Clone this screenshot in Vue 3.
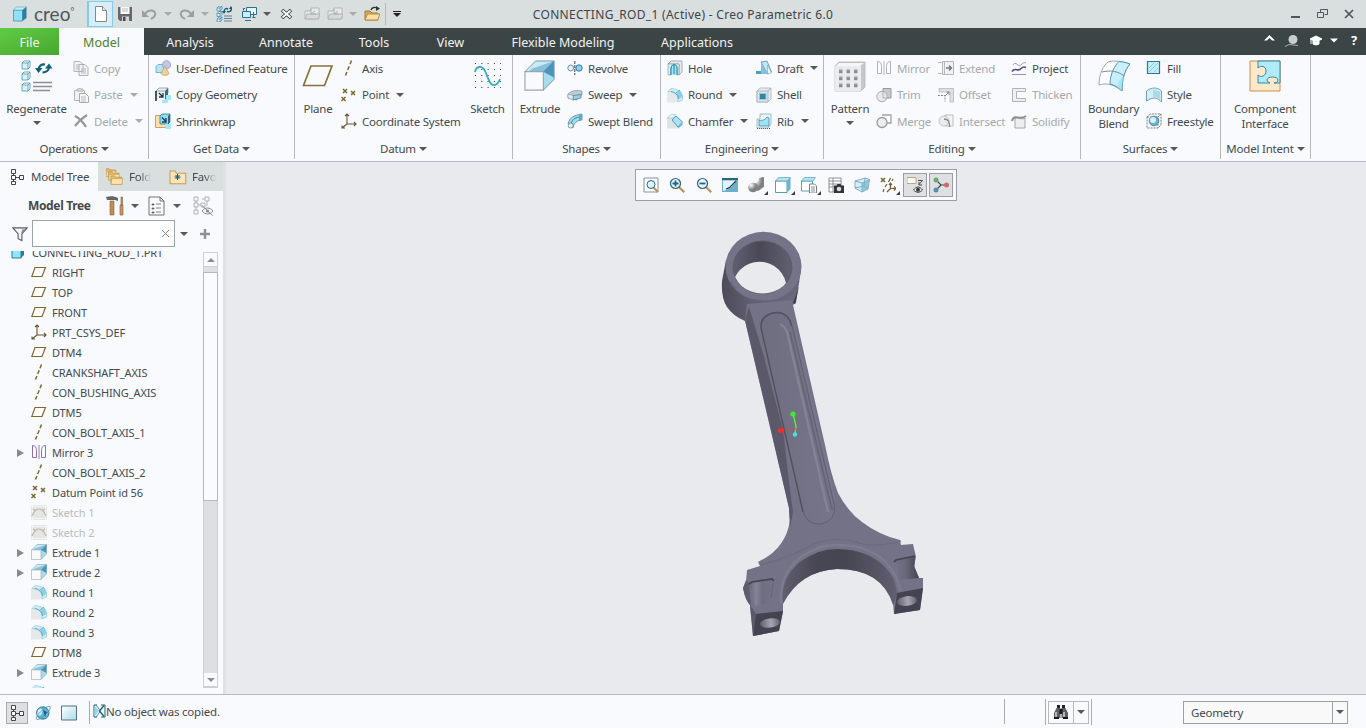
<script setup>
const box = (x, y, s = 5) =>
  `<path d="M${x} ${y + 2}h${s}v${s}h-${s}z" fill="#d9f4fc" stroke="#4a93ae" stroke-width=".8"/><path d="M${x} ${y + 2}l2-2h${s}l-2 2M${x + s + 2} ${y}v${s}l-2 2" fill="none" stroke="#4a93ae" stroke-width=".8"/>`
const xMark = (x, y, c = '#7b662f') => `<path d="M${x - 2} ${y - 2}l4 4m0-4l-4 4" stroke="${c}" stroke-width="1.5" fill="none"/>`
const magnifier = (inner) =>
  `<path d="M10.2 10.2l5 5" stroke="#b9945e" stroke-width="2.2"/><circle cx="6.5" cy="6.5" r="5" fill="#e9f6fc" stroke="#2d6079" stroke-width="1.2"/>${inner}`
const shapeExtrude =
  '<path d="M.5 6L6 .5h9.500L10 6z" fill="#c9e9f3"/><path d="M4 4.500L15.500 .5 10 6H2.500z" fill="#86c0da"/><path d="M15.500 .5V10L10 15.500V6z" fill="#a8dcec"/><path d="M15.500 .5V9L10 6z" fill="#4a93bb"/><path d="M.5 6H10v9.500H.5z" fill="#fafafc" stroke="#9aa7ae" stroke-width=".6"/><path d="M.5 6L6 .5h9.500V10L10 15.500M10 6l5.500-5.500" fill="none" stroke="#6f99ab" stroke-width=".5"/>'
const shapeRound =
  '<path d="M0 4.500C6 4.500 10 7 11 10v5.500H0z" fill="#e6e8ea"/><path d="M4 1.500C10 1.500 15 5 15.500 9v4L11 15V11C10 7 6 4.500 1 4.500z" fill="#c9eef8" stroke="#7fb9cd" stroke-width=".5"/><path d="M9.500 6.500l3.700-3C15 5.500 15.500 8 15.500 10L11 12c0-2.500-.5-4-1.500-5.500z" fill="#8dd0e5"/><path d="M4 4.500c4 .5 7 3 7.500 7.500M9 6l4-3" fill="none" stroke="#3f8eac" stroke-width=".7"/>'
const shapeMirror = (c) =>
  `<path d="M1.500 1.500c3 0 4 2 4 5v7h-4zM14.500 1.500c-3 0-4 2-4 5v7h4z" fill="none" stroke="${c}"/><path d="M8 1v14" stroke="${c}" stroke-width=".9"/>`
const shapeCsys =
  '<path d="M6 1v10h9M6 11l-5 4M4 3l2-2 2 2M13 9l2 2-2 2M1 12.500V15h3" fill="none" stroke="#6b5433" stroke-width="1.100"/>'
const shapePlane = '<path d="M4 3.500h10.500l-3.500 9H.800z" fill="#fdfdfb" stroke="#7d6734" stroke-width="1.200"/>'
const shapeAxis = '<path d="M10.500 .5L4.500 15.500" stroke="#7d6734" stroke-width="1.500" stroke-dasharray="4 2.200"/>'
const shapePoint = xMark(4, 4) + xMark(12, 6) + xMark(2.5, 12)
const shapeTree = (c) =>
  `<path d="M4.500 3v10M4.500 8.500h7" stroke="${c}" fill="none"/><path d="M2.500 .5h4v4h-4zM2.500 6.500h4v4h-4zM2.500 12.500h4v3h-4zM10.500 6.500h4v4h-4z" fill="#fff" stroke="${c}"/>`
const shapeFolder = (x, y, s = 1) =>
  `<g transform="translate(${x} ${y}) scale(${s})"><path d="M0 1h4l1 1.500h7v8H0z" fill="#e8bd73" stroke="#b48a43" stroke-width=".8"/><path d="M1 4h12l-1 6.500H0z" fill="#fbe2ac" stroke="#c79c54" stroke-width=".7"/></g>`
const greyFolder =
  '<path d="M1 13V5h5l1-3h8v11z" fill="#e9ebeb" stroke="#b3b7b7"/><path d="M1 13l2-5h13l-2 5z" fill="#d7dada" stroke="#b3b7b7"/><path d="M7 3v5h5M7 8l4-3" stroke="#a9aeae" fill="none"/>'

const icons = {
  cube: '<path d="M1.500 4h9v11h-9z" fill="#8fe0fa" stroke="#5a9fb5"/><path d="M1.500 4l3-3h10l-4 3z" fill="#c3effb" stroke="#5a9fb5" stroke-width=".6"/><path d="M14.500 1v11l-4 3V4z" fill="#2a7f9c"/>',
  newDoc: '<path d="M2.500 .5h7l4 4v11h-11z" fill="#fff" stroke="#81898c"/><path d="M9.500 .5v4h4" fill="#e7eaeb" stroke="#81898c"/>',
  save: '<path d="M1 1h14v14H3l-2-2z" fill="#66696b"/><path d="M3.500 1h9v7h-9z" fill="#fcfcfc"/><path d="M5 3h6M5 5h6" stroke="#bbb"/><path d="M5 10.500h7V15H5z" fill="#d6d8d8"/><path d="M6 11h2.500v4H6z" fill="#45484a"/>',
  undo: '<path d="M4 8c2-4 9-5 10-1 1 3-2 5-4 6" fill="none" stroke="#9a9fa0" stroke-width="2"/><path d="M1 4v7h7z" fill="#9a9fa0"/>',
  redo: '<path d="M12 8C10 4 3 3 2 7c-1 3 2 5 4 6" fill="none" stroke="#9a9fa0" stroke-width="2"/><path d="M15 4v7H8z" fill="#9a9fa0"/>',
  regen: box(1, 0, 3) + box(1, 5.500, 3) + box(1, 11, 3) + '<path d="M8 6c0-3 2-4 4-3M15 2c1 3-1 4-4 3.500" fill="none" stroke="#175d78" stroke-width="1.500"/><path d="M6 5h4L8 8zM17 3h-4l2-3z" fill="#175d78"/><path d="M8 10h8M8 12.500h8M8 15h8" stroke="#607f8c"/>',
  windows: '<path d="M5.500 1.500h10v7h-10z" fill="#e7f8fc" stroke="#306f8a"/><path d="M1.500 5.500h8v6h-8z" fill="#c9eef9" stroke="#306f8a"/><path d="M11.500 11.500h3M4 14.500h6M12.500 6v5M2.500 2.500v2M2 2.500h2" stroke="#306f8a" fill="none"/>',
  close: '<path d="M3 4l9 8m0-8l-9 8" stroke="#33393b" stroke-width="3.600"/><path d="M3.500 4.500l8 7m0-7l-8 7" stroke="#fff" stroke-width="1.800"/>',
  greyFolder,
  open: '<path d="M1 14V5h5l2 2h6v7z" fill="#d9a956" stroke="#a47b38"/><path d="M1 14l2.500-6H16l-2.500 6z" fill="#fbe0a4" stroke="#b98e49"/><path d="M7 4c1-3 4-3 6-2" stroke="#333" stroke-width="1.300" fill="none"/><path d="M12 0l4 2.500-4 2.500z" fill="#333"/>',
  regenerate: box(1, 1, 6) + box(1, 12, 6) + box(1, 23, 6) + '<path d="M17.500 10c0-4 3-6 6.500-5.500M28 6.500c0 4-3 6-6.500 6" fill="none" stroke="#12607d" stroke-width="2.200"/><path d="M14 8h7.500l-4 5zM31.500 8.500H24l4-5z" fill="#12607d"/><path d="M12 22.500h19M12 26.500h19M12 30.500h17" stroke="#8b9095" stroke-width="1.600"/>',
  copy: '<path d="M1 1.500h6l3 3v7H1zM6 4.500h6l3 3v8H6z" fill="#f1f2f3" stroke="#afb3b6"/><path d="M3 5h3M3 7h3M3 9h3M8 9h5M8 11h5M8 13h5" stroke="#b7babd"/>',
  paste: '<path d="M1.500 3.500h10v10h-10z" fill="#efefef" stroke="#b3b6b8"/><path d="M4 4V2h2l1-1 1 1h2v2z" fill="#ddd" stroke="#b3b6b8"/><path d="M6.500 6.500h6l3 3v6h-9z" fill="#f8f8f8" stroke="#a9adb0"/><path d="M8 10h5M8 12h5M8 14h5" stroke="#b7babd"/>',
  delete: '<path d="M2 3c4 2 8 6 11 11M14 2C9 5 5 9 2 13" fill="none" stroke="#94989b" stroke-width="2.200"/>',
  udf: '<path d="M1 6.500l2-2h8v6l-2 2H1z" fill="#b3e5f4" stroke="#5a9cb3" stroke-width=".7"/><circle cx="11.500" cy="4.800" r="4.200" fill="#c3c5ea" stroke="#8c90bd" stroke-width=".6"/><path d="M10 6l4 7.500c-1 2.500-7 2.500-8 0z" fill="#efcf9b" stroke="#b3935e" stroke-width=".6"/>',
  copyGeom: '<path d="M1 4l3-3h9v5M1 14V4h9" fill="#e9eef0" stroke="#8a959b" stroke-width=".8"/><path d="M1 14V4" stroke="#222f38" stroke-width="1.500"/><path d="M4 6l4 4M8 6v4H4" fill="none" stroke="#1b3444" stroke-width="1.300"/><path d="M10 4l3-3v8l-3 4z" fill="#2c6f86"/><path d="M11 8h5v5h-5zM7 13h6v3H7z" fill="#9feaff"/>',
  shrinkwrap: '<path d="M.5 2.500h12v12H.5z" fill="#fbdfae" stroke="#cfa159"/><path d="M5 3l2-2h8v8l-2 2H5z" fill="#94dbf1" stroke="#34738b" stroke-width=".8"/><path d="M13 3l2-2v8l-2 2z" fill="#2d6988"/><path d="M7 4.500l4 4M11 5v4H7" fill="none" stroke="#1b3f55" stroke-width="1.300"/><path d="M10.500 11H16v5h-5.500z" fill="#a0eaff"/>',
  planeBig: '<path d="M9 6h21L22.500 25.500H1.500z" fill="none" stroke="#86723d" stroke-width="1.700"/>',
  axis: shapeAxis,
  point: shapePoint,
  csys: shapeCsys,
  sketchBig: '<g stroke="#2d3338" stroke-width="1" stroke-dasharray="1 5.300"><path d="M3 3.500h26M3 9.500h26M3 15.500h26M3 21.500h26M3 27.500h26"/></g><path d="M3 12C4 6 10 5 13 11c4 9 5 15 10 14 3-1 4-3 5-6" fill="none" stroke="#35a9c7" stroke-width="1.800"/>',
  extrudeBig: `<g transform="scale(1.940)">${shapeExtrude}</g>`,
  revolve: '<circle cx="3.700" cy="8" r="2.900" fill="#dff3fa" stroke="#6f93a3"/><circle cx="12" cy="8" r="3.200" fill="#8fd3ea" stroke="#2f7a98"/><path d="M7.800 1v14" stroke="#3e454a" stroke-dasharray="3 1"/>',
  sweep: '<path d="M1 7C5 3 10 3 15 4v4l-5 1v4L5 12 1 11z" fill="#bccdd5" stroke="#7b929d" stroke-width=".7"/><path d="M6 8.500l8-1v3.500l-8 2z" fill="#9cd0e2" stroke="#507787" stroke-width=".7"/><path d="M1 7l5 1.500V13l-5-2z" fill="#e4ebee" stroke="#7b929d" stroke-width=".6"/>',
  sweptBlend: '<path d="M1 11C2 5 7 2 15 1v6c-5 0-8 3-9 8z" fill="#a5dbec" stroke="#4c8aa3" stroke-width=".8"/><path d="M4 11C5 6 9 4 14 4" fill="none" stroke="#246b8b" stroke-width=".8"/><path d="M15 1v6l-3 1V2z" fill="#5fa9c5"/><circle cx="3.700" cy="12.500" r="2.500" fill="#e7f3f6" stroke="#6b8793" stroke-width=".8"/>',
  hole: '<path d="M1 4l3-3h11v11l-3 3V4z" fill="#e8ecee" stroke="#8aa0a9" stroke-width=".8"/><path d="M1 4h11v11h-2V8c0-4-6-4-6 0v7H1z" fill="#d8eef5" stroke="#8aa0a9" stroke-width=".7"/><path d="M4 15V8c1-5 6-4 6 0v7M7 5v9" fill="#a3ebff" stroke="#18799a"/>',
  round: shapeRound,
  chamfer: '<path d="M0 5h6l5 6v4.500H0z" fill="#e0e3e5"/><path d="M0 5l4-3.500h5l-3 3.500z" fill="#e9f6fa" stroke="#8bb5c5" stroke-width=".5"/><path d="M9 3l6.500 6-4.500 5-6-7z" fill="#a9e4f5" stroke="#3385a4" stroke-width=".8"/><path d="M11 14l4.500-5v3L11 15.500z" fill="#6bb5d0"/>',
  draft: '<path d="M5 2l6-1 4.500 11-4 2z" fill="#c3e6f1" stroke="#5490a8" stroke-width=".8"/><path d="M5 2l6 12H5z" fill="#7fc2dd"/><path d="M0 11h5v3H0z" fill="#4f9dc2"/><path d="M11.500 5l4 8-4 1z" fill="#e9f5f9" stroke="#6c9bac" stroke-width=".5"/>',
  shell: '<path d="M1 4l3-3h11v11l-3 3H1z" fill="#e6ebed" stroke="#a5b1b7" stroke-width=".8"/><path d="M1 4h11v11H1z" fill="#dbe4e8" stroke="#a5b1b7" stroke-width=".8"/><path d="M3.500 6.500h6.500v6H3.500z" fill="#3c7f9f" stroke="#86cfe5"/><path d="M12 4l3-3" stroke="#a5b1b7"/>',
  rib: '<path d="M1 6h3V1h11v10l-3 4H1z" fill="#eef7fa" stroke="#8badb9" stroke-width=".8"/><path d="M3 13V7c3 1 6 0 8-3l2 1v8z" fill="#9fe2f4" stroke="#418ba3" stroke-width=".8"/><path d="M1 15.500h13" stroke="#38687a" stroke-dasharray="1 1"/>',
  patternBig: '<path d="M1 6l4-4h26v25l-4 4H1z" fill="#c5c7c9" stroke="#b4b7b9" stroke-width=".8"/><path d="M1 6h26v25H1z" fill="#ececee"/><path d="M5 3h25l-4 3H2z" fill="#f5f5f6"/><g stroke="#8a8e91" stroke-width="3.500" stroke-dasharray="3.500 4"><path d="M5 11.500h19M5 18.500h19M5 25.500h19"/></g><g stroke="#c4c7c8" stroke-width="1.300" stroke-dasharray="3.500 4"><path d="M5 9.500h19M5 16.500h19M5 23.500h19"/></g>',
  mirrorGrey: shapeMirror('#b0b3b6'),
  extend: '<path d="M4.500 1.500h11v13h-11z" fill="#f2f2f3" stroke="#b3b6b8"/><path d="M6.500 2v12M0 2.500h4M0 13.500h4" stroke="#b9bcbe"/><path d="M8 8h5M11 5.500L13.500 8 11 10.500" fill="none" stroke="#707579" stroke-width="1.300"/>',
  trim: '<path d="M7 1.500h8V11H7z" fill="#c8cacc" stroke="#96999b"/><circle cx="6" cy="9.500" r="5.200" fill="#e8e9ea" stroke="#a9acae"/><path d="M7 5v6h4" fill="none" stroke="#aeb1b3"/>',
  merge: '<path d="M6 2h9v8h-4" fill="#fff" stroke="#a0a3a5" stroke-width="1.300"/><circle cx="6" cy="9.500" r="5" fill="#eee" stroke="#999c9f" stroke-width="1.300"/>',
  offset: '<path d="M1 1.500h14.500V15H12V5H1z" fill="#dddfe0" stroke="#b4b7b9" stroke-width=".8"/><path d="M0 8.500h7v6" fill="none" stroke="#888b8d" stroke-dasharray="2 1"/><path d="M7 9l4-4M8.500 5H11v3" fill="none" stroke="#85898b"/>',
  intersect: '<path d="M7 2h8v11H7z" fill="#f4f4f5" stroke="#bbbec0"/><circle cx="6" cy="8" r="5" fill="#ececee" stroke="#c0c3c4"/><path d="M6 6c4 0 6 3 5.500 8" fill="none" stroke="#888b8d" stroke-width="1.400"/>',
  project: '<path d="M2 5c3-5 5 3 8 0 2-2 3-3 5-2" stroke="#9da0a4" fill="none"/><path d="M1 11.500c3-5 6 1 9-3 2-2 3-2 5-1" stroke="#5d4389" stroke-width="1.600" fill="none"/><path d="M1 14.500h14" stroke="#9a8db0"/>',
  thicken: '<path d="M14.500 1.500H1.500v13h13v-3H5.500v-7h9z" fill="#f0f0f1" stroke="#b0b3b5"/>',
  solidify: '<path d="M4 6c3-4 6 2 10-1v10H4z" fill="#eeeeef" stroke="#a4a7a9"/><path d="M1 8c2-8 7 0 14-5" fill="none" stroke="#8c8f92" stroke-width="2"/>',
  boundary: '<path d="M1 25C1 14 5 5 11 1.500c6-1 12-.5 21 2.500-6 7-8 16-8 27C18 26 10 22 1 25z" fill="#fff" stroke="#9ba7ad"/><path d="M21 1.500c5 .5 7 1 11 2.500-6 7-8 16-8 27-4-4-8-6-12-7C12 15 16 6 21 1.500z" fill="#c9effa" stroke="#4a87a0" stroke-width=".9"/><path d="M4 12c8-2 16-1 22 4" fill="none" stroke="#75909b"/><path d="M26 16l6-12c-5 8-8 17-8 27l-5-4c1-5 3-8 7-11z" fill="#8ddef3" opacity=".6"/>',
  fill: '<path d="M1.500 1.500h12v12h-12z" fill="#c4effa" stroke="#287998" stroke-width="1.200"/><path d="M3 8l5-5M3 12L12 3M8 12l4-4" stroke="#73c1da" stroke-width=".8"/>',
  style: '<path d="M.5 4c5-4 11-4 15 0v11c-4-5-9-5-15-1z" fill="#d5edf4" stroke="#5f99ae" stroke-width=".9"/><path d="M7 3c4 0 6 1 7 2v7c-2-2-5-2-7-2z" fill="#a9dae8"/>',
  freestyle: '<path d="M1 4l3-3h11v11l-3 3H1zM1 4h11v11M12 4l3-3" fill="#f6fafb" stroke="#5c6468" stroke-width=".8" stroke-dasharray="2 1"/><circle cx="8" cy="8" r="4.800" fill="#69b4cd" stroke="#3f8199" stroke-width=".8"/><circle cx="7" cy="7" r="3" fill="#d5f2fa"/>',
  component: '<path d="M1 1h30v30H1z" fill="#fde9c9" stroke="#c6924f"/><path d="M9 1h22v22h-6c2 0 4-1 4-3 0-4-11-4-11 0 0 2 2 2 3 3H9v-8c3 3 8 1 8-4s-5-6-8-3z" fill="#b0ebfa" stroke="#287b99" stroke-width=".9"/>',
  treeDark: shapeTree('#41474b'),
  folders: shapeFolder(0, 0, .8) + shapeFolder(2.500, 3, .85) + shapeFolder(5, 7, .9),
  favorite: '<g transform="translate(1 2) scale(1.050)"><path d="M0 1h5l1 2h9v10H0z" fill="#fae4b8" stroke="#c69d57"/></g><path d="M8.500 6v6M5.500 9h6M6.500 7l4 4m0-4l-4 4" stroke="#175a79"/>',
  tools: '<path d="M0 1c4-1.500 9-1 12 1v3L9 4H1z" fill="#63696b"/><path d="M4 5h4v14H4z" fill="#c08f55" stroke="#76552e" stroke-width=".5"/><path d="M15 1h1.500v8H15zM14 9h3v10h-3z" fill="#c9985b" stroke="#755d3e" stroke-width=".6"/>',
  settings: '<path d="M1 1h11l4 4v14H1z" fill="#fafafa" stroke="#6f7578"/><path d="M12 1v4h4" fill="none" stroke="#6f7578"/><path d="M4 8h2v1H4zM4 12h2v1H4zM4 16h2v1H4zM8 8h5M8 12h5M8 16h5" stroke="#71777a" stroke-width=".9"/>',
  hideTree: '<path d="M3 3v13M3 9h6M9 3h7M14 3v7" stroke="#b0b4b6"/><path d="M1 1h4v4H1zM1 7h4v4H1zM1 14h4v4H1zM8 7h4v4H8zM12 1h4v4h-4z" fill="#f5f6f6" stroke="#b0b4b6"/><path d="M9 15c3-4 8-4 11 0-3 4-8 4-11 0M9 9.500l10.500 10" stroke="#858a8d" fill="none"/><circle cx="14.500" cy="15" r="1.600" fill="#858a8d"/>',
  funnel: '<path d="M1 1.500h15L10.500 8v7l-4-2V8z" fill="#f3f5f6" stroke="#575f63" stroke-width="1.200"/><path d="M11 3h3L9.500 8z" fill="#879096"/>',
  partCube: '<path d="M2 4h9v10H2z" fill="#8ee8ff" stroke="#317b93"/><path d="M11 4l3-3v10l-3 3z" fill="#317b93"/>',
  plane: shapePlane,
  mirror: shapeMirror('#8a71ac'),
  sketch: '<path d="M0 1h16v15H0z" fill="#e5e6e4"/><path d="M1.500 1v15M14.500 1v15M0 2.500h16M0 14.500h16" stroke="#f3f3f0"/><path d="M1 12C3 7 6 5 8 5s5 2 7 7M2 5l3 2M14 5l-3 2" stroke="#bcb8aa" stroke-width="1.200" fill="none"/>',
  extrude: shapeExtrude,
  fit: '<path d="M1 1h14v14H1z" fill="#fafcfd" stroke="#89949a"/><path d="M10 10l5 5" stroke="#ba965d" stroke-width="2"/><circle cx="8" cy="7.500" r="4" fill="#def3fb" stroke="#2c657e"/>',
  zoomIn: magnifier('<path d="M3.500 6.500h6M6.500 3.500v6" stroke="#1c6686" stroke-width="1.800"/>'),
  zoomOut: magnifier('<path d="M3.500 6.500h6" stroke="#1c6686" stroke-width="1.800"/>'),
  repaint: '<path d="M0 1h16v14H0z" fill="#6fb0c8"/><path d="M0 1h16v2H0z" fill="#276883"/><path d="M1 3.500h13c-2 5-6 9-13 10.500z" fill="#e2f4fa"/><path d="M4 12c3-1 4-1 5-3l5-5" fill="none" stroke="#193f53" stroke-width="1.200"/>',
  shading: '<defs><radialGradient id="sphereShade" cx=".3" cy=".25"><stop stop-color="#fdfdfd"/><stop offset="1" stop-color="#7d8184"/></radialGradient></defs><path d="M5 6C9 7 11 3 11 1l5-1v10c-3 1-4 4-7 4z" fill="url(#sphereShade)"/><circle cx="5" cy="10.500" r="4.800" fill="url(#sphereShade)"/>',
  savedView: '<path d="M.5 4h11.500v11.500H.5z" fill="#fff" stroke="#5b9fb7"/><path d="M.5 4l3-3.500h12L12 4z" fill="#b4e4f2" stroke="#5b9fb7" stroke-width=".7"/><path d="M12 4l3.500-3.500V12L12 15.500z" fill="#69b5d0"/>',
  viewManager: '<path d="M.5 4h11v10H.5z" fill="#fff" stroke="#5b9fb7"/><path d="M.5 4l3-3.500h11L12 4z" fill="#b4e4f2" stroke="#5b9fb7" stroke-width=".7"/><path d="M8.500 7h5l2 2v7h-7z" fill="#fff" stroke="#6c7478" stroke-width=".9"/><path d="M10 10h4M10 12h4M10 14h4" stroke="#6c7478" stroke-width=".8"/>',
  camera: '<path d="M1 1h12v14H1zM1 4h12M1 7h12M1 10h12M5 1v14" fill="#fff" stroke="#7f8486" stroke-width=".9"/><path d="M6 8.500h2.500l1-1.500h3l1 1.500H16V16H6z" fill="#303436"/><circle cx="11" cy="12" r="2.300" fill="#d8dcdd"/>',
  perspective: '<path d="M1 4l10-3 4.500 1.500L14 12l-6 3-7-4z" fill="#d6edf5" stroke="#6a9fb4" stroke-width=".8"/><path d="M1 4l7 2 7.500-3.500M8 6v9M11 1l-1 8 4 3M1 11l9-2" fill="none" stroke="#6a9fb4" stroke-width=".8"/><path d="M8 6l7-3-1 9-6 3z" fill="#75b7d0" opacity=".7"/>',
  datums: xMark(3, 3) + '<path d="M10.500 1l-2 4M7 7l-2 3M4 12l-1 3M13 2l-1 2M10.500 6v5.500h5M10.500 11.500L7 15M14 9.500l2 2-2 2M9 8l1.500-2L12 8" stroke="#725c32" stroke-width="1.200" fill="none"/>',
  annotation: '<path d="M0 .5h9v6H0z" fill="#fffdf5" stroke="#b5a983"/><path d="M11 3.500h4.500L12 7.500M12 5v3h3" fill="none" stroke="#464b4e"/><path d="M6.500 13c3-4 6-4 9 0-3 3-6 3-9 0" fill="#eee" stroke="#363b3e"/><circle cx="11" cy="12.800" r="2" fill="#363b3e"/>',
  spin: '<path d="M3 3l5 5h6M8 8l-5 5" stroke="#45494b" stroke-width="1.200" fill="none"/><circle cx="3" cy="3" r="2.500" fill="#6ba870"/><circle cx="13.500" cy="8" r="2.500" fill="#d06a6a"/><circle cx="3" cy="13" r="2.500" fill="#5a8fb3"/>',
  globe: '<circle cx="7.800" cy="8" r="6.200" fill="#5fb3da" stroke="#2d7ba1"/><path d="M3 5c4-3 5 0 4 3-2 4-3 2-5 2M9 12c0-5 5-3 5-5" fill="#d5f2fb"/><path d="M2 14.500C-2 13 11 0 15 1.500c2 3-8 13-13 13" fill="none" stroke="#5b8fa8" stroke-width=".9"/><path d="M8 5l4 2-2 5z" fill="#1d628a"/>',
  blank: '<defs><linearGradient id="pane" x2="1" y2="1"><stop stop-color="#fff"/><stop offset="1" stop-color="#a8dce9"/></linearGradient></defs><path d="M.5 1h15v14H.5z" fill="url(#pane)" stroke="#53717e"/>',
  message: '<path d="M4 1H1v12h3M8 1h4v12H8" fill="#eef8fb" stroke="#20637b"/><path d="M1.500 2L6 7l-4.500 5z" fill="#8ad9ed"/><path d="M3 1l4.500 6M3 13l4.500-6" stroke="#2d7590" stroke-width=".8"/><path d="M11 1.500L6.500 7l4.500 5.500" fill="none" stroke="#1c5d78" stroke-width="1.300"/>',
  binoculars: '<path d="M4 1h3v3H4zM9 1h3v3H9z" fill="#222"/><path d="M3.500 4h4v10H1V9zM8.500 4h4L15 9v5H8.500z" fill="#5c6062"/><path d="M2 8h2v5H2zM10 8h2v5h-2z" fill="#b4b7b9"/><path d="M6.500 5h3v5h-3zM1 13h5v2H1zM10 13h5v2h-5z" fill="#151719"/>'
}

const quickTools = [
  ['newDoc', 25, 'active'], ['save', 24], ['undo', 24], ['', 14, 'dim'], ['redo', 24], ['', 12, 'dim'],
  ['regen', 26], ['windows', 23], ['', 14], ['close', 26], ['greyFolder', 23], ['greyFolder', 24], ['', 12, 'dim'], ['open', 26]
]
const tabs = [
  ['File', 59, 'file'], ['Model', 85, 'current'], ['Analysis', 92], ['Annotate', 100], ['Tools', 76],
  ['View', 77], ['Flexible Modeling', 148], ['Applications', 120]
]
const list = (w, ...items) => ({ w, items: items.map(([icon, label, opt = '']) => ({ icon, label, dim: opt.includes('d'), menu: opt.includes('m') })) })
const big = (w, icon, lines, menu) => ({ w, icon, lines, menu })
const groups = [
  { w: 149, title: 'Operations', cols: [big(73, 'regenerate', ['Regenerate'], true), list(75, ['copy', 'Copy', 'd'], ['paste', 'Paste', 'dm'], ['delete', 'Delete', 'dm'])] },
  { w: 146, title: 'Get Data', cols: [big(6), list(139, ['udf', 'User-Defined Feature'], ['copyGeom', 'Copy Geometry'], ['shrinkwrap', 'Shrinkwrap'])] },
  { w: 218, title: 'Datum', cols: [big(46, 'planeBig', ['Plane']), list(122, ['axis', 'Axis'], ['point', 'Point', 'm'], ['csys', 'Coordinate System']), big(49, 'sketchBig', ['Sketch'])] },
  { w: 148, title: 'Shapes', cols: [big(54, 'extrudeBig', ['Extrude']), list(93, ['revolve', 'Revolve'], ['sweep', 'Sweep', 'm'], ['sweptBlend', 'Swept Blend'])] },
  { w: 163, title: 'Engineering', cols: [big(6), list(89, ['hole', 'Hole'], ['round', 'Round', 'm'], ['chamfer', 'Chamfer', 'm']), list(67, ['draft', 'Draft', 'm'], ['shell', 'Shell'], ['rib', 'Rib', 'm'])] },
  { w: 257, title: 'Editing', cols: [big(52, 'patternBig', ['Pattern'], true), list(62, ['mirrorGrey', 'Mirror', 'd'], ['trim', 'Trim', 'd'], ['merge', 'Merge', 'd']), list(73, ['extend', 'Extend', 'd'], ['offset', 'Offset', 'd'], ['intersect', 'Intersect', 'd']), list(69, ['project', 'Project'], ['thicken', 'Thicken', 'd'], ['solidify', 'Solidify', 'd'])] },
  { w: 140, title: 'Surfaces', cols: [big(65, 'boundary', ['Boundary', 'Blend']), list(74, ['fill', 'Fill'], ['style', 'Style'], ['freestyle', 'Freestyle'])] },
  { w: 90, title: 'Model Intent', cols: [big(88, 'component', ['Component', 'Interface'])] }
]
const tree = [
  ['plane', 'RIGHT'], ['plane', 'TOP'], ['plane', 'FRONT'], ['csys', 'PRT_CSYS_DEF'], ['plane', 'DTM4'],
  ['axis', 'CRANKSHAFT_AXIS'], ['axis', 'CON_BUSHING_AXIS'], ['plane', 'DTM5'], ['axis', 'CON_BOLT_AXIS_1'],
  ['mirror', 'Mirror 3', 'e'], ['axis', 'CON_BOLT_AXIS_2'], ['point', 'Datum Point id 56'],
  ['sketch', 'Sketch 1', 'd'], ['sketch', 'Sketch 2', 'd'], ['extrude', 'Extrude 1', 'e'], ['extrude', 'Extrude 2', 'e'],
  ['round', 'Round 1'], ['round', 'Round 2'], ['round', 'Round 3'], ['plane', 'DTM8'], ['extrude', 'Extrude 3', 'e'], ['round', '']
]
const viewTools = [
  ['fit'], ['zoomIn'], ['zoomOut'], ['repaint'], ['shading', 'c'], ['savedView', 'c'], ['viewManager', 'c'],
  ['camera'], ['perspective'], ['datums', 'c'], ['annotation', 'on'], ['spin', 'on']
]
</script>

<template>
  <div class="app">
    <header class="titlebar">
      <svg class="ic logo-cube" viewBox="0 0 16 16" v-html="icons.cube"></svg>
      <span class="logo">creo<i>°</i></span>
      <div class="quick">
        <span v-for="(t, i) in quickTools" :key="i" class="slot" :class="t[2]" :style="{ width: t[1] + 'px' }">
          <svg v-if="t[0]" class="ic" viewBox="0 0 16 16" v-html="icons[t[0]]"></svg>
          <b v-else class="arrow"></b>
        </span>
        <span class="customize"><b class="arrow"></b></span>
      </div>
      <span class="title">CONNECTING_ROD_1 (Active) - Creo Parametric 6.0</span>
      <svg class="window-controls" viewBox="0 0 70 16">
        <path d="M1 11h9" stroke-width="2" />
        <path d="M27.500 6.500h6v5h-6zM30.500 6V3.500h7v5h-3" />
        <path d="M55 4l8 8m0-8l-8 8" stroke-width="1.700" />
      </svg>
    </header>

    <nav class="tabs">
      <span v-for="t in tabs" :key="t[0]" :class="t[2]" :style="{ width: t[1] + 'px' }">{{ t[0] }}</span>
      <svg class="nav-icons" viewBox="0 0 98 18">
        <path d="M0 8.500l5.500-5.500L11 8.500H8L5.500 6 3 8.500z" fill="#fff" />
        <circle cx="29" cy="7.500" r="4.500" fill="#c9cdcd" /><path d="M21 14.500l4-2 9 1" fill="none" stroke="#a7adad" />
        <path d="M46 7l6-3 6 3-6 3zM49 9v3q3 2 6 0V9M47 8v4" fill="#fff" stroke="#fff" />
        <path d="M66 6.500h8l-4 4z" fill="#fff" />
        <text x="87" y="13">?</text>
      </svg>
    </nav>

    <section class="ribbon">
      <div v-for="g in groups" :key="g.title" class="group" :style="{ width: g.w + 'px' }">
        <div class="cols">
          <div v-for="(c, i) in g.cols" :key="i" class="col" :class="{ large: !c.items }" :style="{ width: c.w + 'px' }">
            <template v-if="c.items">
              <div v-for="it in c.items" :key="it.label" class="cmd" :class="{ dim: it.dim }">
                <svg class="ic" viewBox="0 0 16 16" v-html="icons[it.icon]"></svg>
                <span>{{ it.label }}</span><b v-if="it.menu" class="arrow"></b>
              </div>
            </template>
            <template v-else-if="c.icon">
              <svg class="ic-big" viewBox="0 0 32 32" v-html="icons[c.icon]"></svg>
              <span v-for="l in c.lines" :key="l" class="line">{{ l }}</span>
              <b v-if="c.menu" class="arrow"></b>
            </template>
          </div>
        </div>
        <div class="group-title">{{ g.title }}<b class="arrow"></b></div>
      </div>
    </section>

    <main class="work">
      <aside class="side">
        <div class="side-tabs">
          <span class="side-tab on"><svg class="ic" viewBox="0 0 16 16" v-html="icons.treeDark"></svg>Model Tree</span>
          <span class="side-tab folder-tab"><svg class="ic wide" viewBox="0 0 18 18" v-html="icons.folders"></svg><em>Fold</em></span>
          <span class="side-tab favorite-tab"><svg class="ic wide" viewBox="0 0 18 18" v-html="icons.favorite"></svg><em>Favo</em></span>
        </div>
        <div class="tree-head">
          <strong>Model Tree</strong>
          <svg class="ic20" viewBox="0 0 20 20" v-html="icons.tools"></svg><b class="arrow"></b>
          <svg class="ic20" viewBox="0 0 20 20" v-html="icons.settings"></svg><b class="arrow"></b>
          <svg class="ic20 hide" viewBox="0 0 20 20" v-html="icons.hideTree"></svg>
        </div>
        <div class="search">
          <svg class="ic" viewBox="0 0 17 16" v-html="icons.funnel"></svg>
          <div class="field"><svg viewBox="0 0 10 10"><path d="M1 1l8 8m0-8L1 9" /></svg></div>
          <b class="arrow"></b>
          <svg class="plus" viewBox="0 0 12 12"><path d="M6 1v10M1 6h10" /></svg>
        </div>
        <div class="tree-area">
          <div class="tree">
            <div class="row root"><svg class="ic" viewBox="0 0 16 16" v-html="icons.partCube"></svg><span>CONNECTING_ROD_1.PRT</span></div>
            <div v-for="(r, i) in tree" :key="i" class="row" :class="{ dim: r[2] === 'd' }">
              <i class="expander" :class="{ shown: r[2] === 'e' }"></i>
              <svg class="ic" viewBox="0 0 16 16" v-html="icons[r[0]]"></svg><span>{{ r[1] }}</span>
            </div>
          </div>
          <div class="scroll">
            <div class="scroll-btn"><b class="up"></b></div>
            <div class="thumb"></div>
            <div class="scroll-btn last"><b class="arrow"></b></div>
          </div>
        </div>
      </aside>

      <section class="canvas">
        <div class="view-bar">
          <span v-for="t in viewTools" :key="t[0]" class="view-tool" :class="t[1]">
            <svg class="ic" viewBox="0 0 16 16" v-html="icons[t[0]]"></svg>
          </span>
        </div>
        <svg class="rod" viewBox="715 225 215 420">
          <defs>
            <linearGradient id="bore" x1="0" x2="1"><stop stop-color="#615f70" /><stop offset=".45" stop-color="#4a4855" /><stop offset="1" stop-color="#625f71" /></linearGradient>
            <linearGradient id="arch" x1="0" x2="1"><stop stop-color="#605e6f" /><stop offset=".3" stop-color="#484652" /><stop offset=".55" stop-color="#474551" /><stop offset="1" stop-color="#615f70" /></linearGradient>
            <linearGradient id="collar" x1="0" x2="1"><stop stop-color="#4d4b59" /><stop offset=".35" stop-color="#5f5d6e" /><stop offset="1" stop-color="#6c6a7d" /></linearGradient>
            <linearGradient id="pin" x1="0" x2="1"><stop stop-color="#625f6d" /><stop offset=".55" stop-color="#a8a6b2" /><stop offset="1" stop-color="#65626f" /></linearGradient>
            <linearGradient id="web" x1="0" x2="1"><stop stop-color="#6f6d80" /><stop offset="1" stop-color="#777589" /></linearGradient>
            <linearGradient id="notchRight" x1="0" x2="1"><stop stop-color="#747286" /><stop offset=".4" stop-color="#6a687a" /><stop offset="1" stop-color="#464452" /></linearGradient>
            <linearGradient id="notchLeft" x1="0" x2="1"><stop stop-color="#676577" /><stop offset=".3" stop-color="#858395" /><stop offset=".55" stop-color="#6f6d80" /><stop offset="1" stop-color="#747286" /></linearGradient>
            <clipPath id="boreClip"><ellipse cx="762.500" cy="267.300" rx="29.500" ry="26.300" /></clipPath>
          </defs>
          <path d="M726 260L722 281Q721 298 727 307T745 321L757 328L796 303L801 270z" fill="url(#collar)" />
          <path d="M747 304L792.500 300L793 305L821.500 430L825 445Q831 475 838 493Q848 512 862 522Q879 535 900 540L901 545L913 544L916 557L914 566L919 578H923V588L920 610L894 614L893 603Q883 569 837 569Q800 571 783 602L783 612L779 631L753 636L750 605Q745 600 743 588L746 582L747 570L760 566L758 562Q786 549 790 520L789 508L745 321z" fill="#747286" />
          <path d="M745 320L749 307L763 353L783 430L790 490L793 512L790 528L789 508L771 430z" fill="#5b5969" />
          <path d="M793 303L799 286L795 304z" fill="#3f3d49" />
          <ellipse cx="763.500" cy="266.500" rx="38" ry="34.700" fill="#757387" />
          <ellipse cx="762.500" cy="267.300" rx="29.500" ry="26.300" fill="url(#bore)" stroke="#5a5867" stroke-width=".8" />
          <ellipse cx="759.500" cy="288" rx="27" ry="26.300" fill="#e8eaed" clip-path="url(#boreClip)" />
          <path d="M731 282Q738 300 765 301Q793 301 799 281" fill="none" stroke="#656377" />
          <path d="M761 328Q760 313 777 312Q790 313 792 326L835 507Q837 523 821 525Q808 526 803 511z" fill="url(#web)" />
          <path d="M803 512L761 328Q760 314 777 312.500Q789 313 791.500 326" fill="none" stroke="#535160" stroke-width="1.500" />
          <path d="M780 324Q787 327 789 340L828 512" fill="none" stroke="#848295" stroke-width="2.400" />
          <path d="M790 332L832 510" stroke="#656376" stroke-width="1.500" fill="none" />
          <path d="M792 325L834 504Q837 520 822 524Q807 526 803 511" fill="none" stroke="#5f5d70" stroke-width="1" />
          <path d="M794 325L835 501" stroke="#7f7d90" stroke-width=".8" />
          <path d="M760 565Q792 557 814 544Q837 535 862 544Q880 547 901 541" fill="none" stroke="#6c6a7d" stroke-width="1.200" />
          <path d="M781 603Q779 574 801 557Q820 544 838 545Q875 545 892 570Q899 580 900 591" fill="none" stroke="#7d7b8f" stroke-width="2.500" />
          <path d="M783 604Q780 578 800 562Q817 549 837 549Q872 549 890 573Q897 583 897 596L893 605Q882 569 837 569Q800 571 783 604z" fill="url(#arch)" />
          <path d="M743 588L746 580L749 584L751 606Q746 602 743 588z" fill="#5d5b6c" />
          <path d="M749 583L773 579L771 603L755 606z" fill="url(#notchLeft)" />
          <path d="M749 584L752 582L772 579L774 581" fill="none" stroke="#45434f" stroke-width="1.700" /><path d="M773 583L771 598" stroke="#636173" stroke-width=".8" />
          <path d="M750 605L756 614L753 636z" fill="#5b5969" /><path d="M756 614L783 611L779 631L753 636z" fill="#454351" />
          <ellipse cx="770" cy="623" rx="10" ry="4.500" transform="rotate(-8 770 623)" fill="url(#pin)" />
          <path d="M896 560L915 556L914.500 567L919 578L898 580z" fill="url(#notchRight)" /><path d="M894 562L896 560L915 556" fill="none" stroke="#45434f" stroke-width="1.700" />
          <path d="M897 593L923 588L920 610L894 614z" fill="#454351" />
          <ellipse cx="907" cy="601" rx="10" ry="4.800" transform="rotate(-8 907 601)" fill="url(#pin)" />
          <path d="M793 414L796 426L795 434" fill="none" stroke="#52ff28" stroke-width="1.300" /><circle cx="793" cy="414" r="2.600" fill="#3eea2e" />
          <path d="M780 430.500L797 429" stroke="#df414a" stroke-dasharray="4 1" /><path d="M777 430l4-2.500 3 1v4l-4 .5z" fill="#ff2929" />
          <circle cx="795" cy="434.500" r="2.200" fill="#48e1e2" />
        </svg>
      </section>
    </main>

    <footer class="status">
      <div class="status-left">
        <span class="toggle"><svg class="ic" viewBox="0 0 16 16" v-html="icons.treeDark"></svg></span>
        <svg class="ic" viewBox="0 0 16 16" v-html="icons.globe"></svg>
        <svg class="ic" viewBox="0 0 16 16" v-html="icons.blank"></svg>
      </div>
      <div class="message"><svg viewBox="0 0 13 14" v-html="icons.message"></svg>No object was copied.</div>
      <div class="find"><span><svg class="ic" viewBox="0 0 16 16" v-html="icons.binoculars"></svg></span><span class="drop"><b class="arrow"></b></span></div>
      <div class="select"><span>Geometry</span><i><b class="arrow"></b></i></div>
    </footer>
  </div>
</template>

<style>
body { margin: 0; overflow: hidden; }
</style>
<style scoped>
* { box-sizing: border-box; }
.app { width: 1366px; height: 728px; display: flex; flex-direction: column; font: 11.500px/15px "Noto Sans", "Open Sans", sans-serif; letter-spacing: -.2px; color: #45494c; background: #f8fafd; overflow: hidden; white-space: nowrap; }
svg { display: block; flex: none; }
.ic { width: 16px; height: 16px; }
.ic-big { width: 32px; height: 32px; }
.arrow { flex: none; width: 0; height: 0; border: 4px solid transparent; border-top: 4px solid #55595c; border-bottom: 0; }
.dim .arrow, .slot.dim .arrow { border-top-color: #a8abad; }

.titlebar { height: 28px; flex: none; background: #d9dedf; display: flex; align-items: center; position: relative; }
.logo-cube { margin-left: 12px; }
.logo { width: 55px; padding: 0 0 3px 6px; font: 19px/24px Lato, sans-serif; letter-spacing: 0; color: #4e5659; }
.logo i { font-size: 9px; font-style: normal; vertical-align: 6px; }
.quick { height: 26px; margin-left: 4px; display: flex; border-left: 1px solid #b4b9ba; }
.slot { display: flex; align-items: center; justify-content: center; }
.slot.active { background: #d7eef9; border: 1px solid #83ccea; }
.customize { width: 22px; margin: 2px 0; border-left: 1px solid #b4b9ba; display: flex; align-items: center; justify-content: center; }
.customize .arrow { border-top-color: #222; position: relative; top: 1px; }
.customize .arrow::before { content: ""; position: absolute; left: -4px; top: -6px; width: 8px; height: 1px; background: #222; }
.title { position: absolute; left: 0; right: 0; text-align: center; font-size: 12px; letter-spacing: .3px; color: #3f4446; pointer-events: none; }
.window-controls { width: 70px; height: 16px; margin-left: auto; margin-right: 6px; fill: none; stroke: #50575a; }

.tabs { height: 27px; flex: none; background: #3c4546; color: #f1f3f3; display: flex; font-size: 12.500px; letter-spacing: 0; line-height: 29px; text-align: center; }
.tabs .file { background: linear-gradient(160deg, #60cc45, #47a72f); }
.tabs .current { background: #f8fafd; color: #4c8030; }
.nav-icons { width: 98px; height: 18px; margin: 4px 4px 0 auto; }
.nav-icons text { font: bold 13px "Noto Sans", sans-serif; fill: #fff; }

.ribbon { height: 107px; flex: none; display: flex; border-bottom: 1px solid #b4bac5; background: #f8fafd; }
.group { height: 104px; border-right: 1px solid #b4b7bd; display: flex; flex-direction: column; }
.cols { display: flex; height: 86px; flex: none; }
.col { flex: none; }
.cmd { height: 26.500px; display: flex; align-items: center; gap: 5px; }
.cmd .arrow { margin-left: 2px; }
.cmd.dim { color: #a6a9ac; }
.large { display: flex; flex-direction: column; align-items: center; padding-top: 5px; }
.large .ic-big { margin-bottom: 9px; }
.large .arrow { margin-top: 5px; }
.group-title { display: flex; justify-content: center; align-items: center; gap: 3px; height: 15px; }

.work { flex: 1; min-height: 0; display: flex; }
.side { width: 226px; flex: none; display: flex; flex-direction: column; border-right: 3px solid #dfe2e5; background: #f8fafd; }
.side-tabs { height: 29px; display: flex; background: #d9dedf; flex: none; }
.side-tab { display: flex; align-items: center; gap: 5px; }
.side-tab.on { width: 98px; padding-left: 9px; gap: 6px; background: #f8fafd; }
.side-tab em { font-style: normal; -webkit-mask-image: linear-gradient(90deg, #000 50%, transparent); mask-image: linear-gradient(90deg, #000 50%, transparent); }
.wide { width: 18px; height: 18px; }
.folder-tab { width: 71px; padding-left: 8px; }
.tree-head { height: 29px; flex: none; display: flex; align-items: center; padding-left: 28px; }
.tree-head strong { width: 78px; font-size: 12px; letter-spacing: -.35px; font-weight: 700; }
.ic20 { width: 20px; height: 20px; }
.tree-head .arrow { margin: 0 9px 0 5px; }
.tree-head .hide { margin-left: 3px; }
.search { height: 27px; flex: none; display: flex; align-items: center; padding-left: 12px; }
.field { width: 143px; height: 27px; margin-left: 4px; background: #fff; border: 1px solid #9ba5a9; display: flex; align-items: center; justify-content: flex-end; padding-right: 4px; }
.field svg { width: 9px; height: 9px; stroke: #777; fill: none; }
.search .arrow { margin: 0 11px 0 5px; }
.plus { width: 12px; height: 12px; stroke: #8c9194; stroke-width: 2.500; }
.tree-area { height: 438px; margin-top: 4px; display: flex; }
.tree { width: 203px; height: 437px; overflow: hidden; }
.row { height: 20px; display: flex; align-items: center; font-size: 11px; letter-spacing: -.12px; }
.row span { margin-left: 5px; }
.row.root { margin-top: -9px; padding-left: 10px; }
.row.root span { margin-left: 6px; }
.row.dim { color: #b9bdbe; }
.expander { width: 31px; height: 8px; }
.expander.shown::before { content: ""; display: block; margin: 1px 0 0 17px; width: 0; height: 0; border: 4px solid transparent; border-left: 7px solid #868b8e; border-right: 0; }
.scroll { width: 15px; height: 436px; margin-top: 1px; background: #dddfe1; display: flex; flex-direction: column; border: 1px solid #cdd0d2; }
.scroll-btn { height: 14px; background: #f8fafd; display: flex; align-items: center; justify-content: center; border-bottom: 1px solid #cdd0d2; }
.scroll-btn.last { margin-top: auto; }
.scroll .arrow { border-top-color: #8b8f92; }
.up { border: 4px solid transparent; border-bottom: 4px solid #8b8f92; border-top: 0; }
.thumb { height: 229px; margin: 5px -1px 0; background: #fafbfd; border: 1px solid #b4b8bb; }
.canvas { flex: 1; background: #e8eaed; position: relative; }
.view-bar { position: absolute; left: 409px; top: 7px; width: 322px; height: 32px; border: 1px solid #9b9fa5; background: #f8fafd; display: flex; align-items: center; padding-left: 3px; }
.view-tool { width: 24px; height: 24px; margin-right: 2.360px; display: flex; align-items: center; justify-content: center; position: relative; flex: none; }
.view-tool.on { background: #dfe0e3; border: 1px solid #9a9ea3; }
.view-tool.c::after { content: ""; position: absolute; right: 0; bottom: 2px; border-left: 4px solid transparent; border-bottom: 4px solid #393e41; }
.rod { position: absolute; left: 489px; top: 63px; width: 215px; height: 420px; }

.status { height: 34px; flex: none; border-top: 1px solid #b4bac0; display: flex; align-items: center; background: #f8fafd; }
.status-left { width: 90px; height: 23px; margin-top: 2px; display: flex; align-items: center; gap: 10px; padding-left: 6px; border-right: 1px solid #a8adb0; }
.toggle { width: 22px; height: 22px; background: #dedfe1; border: 1px solid #a9adb0; display: grid; place-items: center; margin-right: -3px; }
.message { width: 915px; height: 25px; display: flex; align-items: center; border-right: 1px solid #a8adb0; padding: 0 0 1px 3px; }
.message svg { width: 13px; height: 14px; }
.find { width: 47px; height: 26px; margin-left: 40px; border-left: 1px solid #a8adb0; border-right: 1px solid #a8adb0; padding: 2px; display: flex; }
.find span { width: 27px; height: 23px; border: 1px solid #b6babd; display: grid; place-items: center; }
.find .drop { width: 15px; border-left: 0; }
.select { width: 165px; height: 23px; margin-left: 91px; margin-top: 1px; border: 1px solid #9ca1a4; background: #f9f9fa; display: flex; justify-content: space-between; align-items: center; padding-left: 7px; }
.select i { width: 15px; height: 21px; border-left: 1px solid #9ca1a4; display: grid; place-items: center; }
</style>
